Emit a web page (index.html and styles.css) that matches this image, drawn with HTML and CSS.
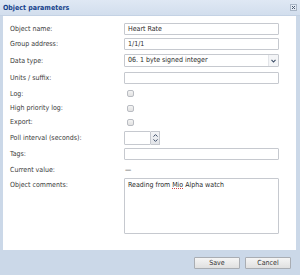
FILE: index.html
```html
<!DOCTYPE html>
<html>
<head>
<meta charset="utf-8">
<link rel="stylesheet" href="styles.css">
</head>
<body>
<div class="dialog">
  <div class="titlebar">
    <span class="title">Object parameters</span>
    <span class="close"><svg width="7" height="7" viewBox="0 0 7 7"><rect x="0.5" y="0.5" width="6" height="6" fill="#e4ebf4" stroke="#a9b6c6"/><path d="M2 2 L5 5 M5 2 L2 5" stroke="#4a5a70" stroke-width="1"/></svg></span>
  </div>
  <div class="main">
    <div class="panel">
      <div class="row r1"><span class="label">Object name:</span><div class="field">Heart Rate</div></div>
      <div class="row r2"><span class="label">Group address:</span><div class="field">1/1/1</div></div>
      <div class="row r3"><span class="label">Data type:</span><div class="field select"><span class="val">06. 1 byte signed integer</span><span class="arrow"><svg width="5" height="4" viewBox="0 0 5 4"><path d="M0.5 0.8 L2.5 3 L4.5 0.8" fill="none" stroke="#3b4c66" stroke-width="1.1"/></svg></span></div></div>
      <div class="row r4"><span class="label">Units / suffix:</span><div class="field"></div></div>
      <div class="row r5"><span class="label">Log:</span><span class="check"></span></div>
      <div class="row r6"><span class="label">High priority log:</span><span class="check"></span></div>
      <div class="row r7"><span class="label">Export:</span><span class="check"></span></div>
      <div class="row r8"><span class="label">Poll interval (seconds):</span><div class="spin"><div class="field small"></div><div class="spinbtn"><svg width="5" height="3" viewBox="0 0 5 3"><path d="M0.5 2.6 L2.5 0.6 L4.5 2.6" fill="none" stroke="#3b4c66" stroke-width="1"/></svg><svg width="5" height="3" viewBox="0 0 5 3"><path d="M0.5 0.4 L2.5 2.4 L4.5 0.4" fill="none" stroke="#3b4c66" stroke-width="1"/></svg></div></div></div>
      <div class="row r9"><span class="label">Tags:</span><div class="field"></div></div>
      <div class="row r10"><span class="label">Current value:</span><span class="dash">&mdash;</span></div>
      <div class="row r11"><span class="label">Object comments:</span><div class="field area">Reading from <span class="spell">Mio</span> Alpha watch</div></div>
    </div>
  </div>
  <div class="footer">
    <span class="btn">Save</span>
    <span class="btn">Cancel</span>
  </div>
</div>
</body>
</html>
```
FILE: styles.css
```css
html, body {
  margin: 0;
  padding: 0;
  background: #cbd8e8;
}
.dialog {
  width: 300px;
  height: 275px;
  display: flex;
  flex-direction: column;
  font-family: "DejaVu Sans Condensed", "DejaVu Sans", sans-serif;
  font-size: 7px;
  color: #3a3a3a;
  background: #cbd8e8;
}
.titlebar {
  height: 15px;
  display: flex;
  align-items: center;
  justify-content: space-between;
  padding: 0 3px 0 3px;
  background: linear-gradient(#dfe8f4, #d2deed);
  border-bottom: 1px solid #c4d2e4;
}
.title {
  font-weight: bold;
  color: #15428b;
  font-size: 7px;
}
.close {
  display: flex;
  width: 7px;
  height: 7px;
  margin-top: -1px;
}
.main {
  flex: 1;
  padding: 0 4px 0 3px;
  display: flex;
}
.panel {
  flex: 1;
  background: #fff;
  padding: 5px 0 0 7px;
}
.row {
  display: flex;
  align-items: center;
}
.label {
  width: 114px;
  flex: none;
}
.r1 { height: 15px; }
.r2 { height: 15px; }
.r3 { height: 19px; }
.r4 { height: 16px; }
.r5 { height: 15px; }
.r6 { height: 14px; }
.r7 { height: 14px; }
.r8 { height: 17px; }
.r9 { height: 16px; }
.r10 { height: 16px; }
.r11 { align-items: flex-start; }
.r11 .label { padding-top: 3px; }
.field {
  box-sizing: border-box;
  width: 155px;
  height: 12px;
  border: 1px solid #c6c9cf;
  border-radius: 1px;
  background: #fff;
  padding: 0 3px;
  line-height: 10px;
  color: #2a2a2a;
}
.select {
  height: 13px;
  display: flex;
  justify-content: space-between;
  padding-right: 0;
  line-height: 11px;
}
.arrow {
  width: 9px;
  display: flex;
  align-items: center;
  justify-content: center;
  border-left: 1px solid #e3e5e9;
  background: #f4f5f7;
}
.check {
  margin-left: 3px;
  width: 7px;
  height: 7px;
  box-sizing: border-box;
  border: 1px solid #b9bcc2;
  border-radius: 2px;
  background: linear-gradient(#f4f4f4, #e2e2e2);
}
.spin {
  display: flex;
  height: 14px;
}
.field.small {
  width: 27px;
  height: 14px;
}
.spinbtn {
  box-sizing: border-box;
  width: 9px;
  height: 14px;
  display: flex;
  flex-direction: column;
  align-items: center;
  justify-content: center;
  gap: 2px;
  border: 1px solid #c6c9cf;
  border-left: none;
  background: linear-gradient(#f3f4f6, #e2e4e8);
}
.dash {
  color: #222;
  margin-left: 1px;
}
.area {
  height: 56px;
  padding-top: 2px;
  line-height: 9px;
}
.spell {
  text-decoration: underline dotted #d04848;
  text-decoration-thickness: 1px;
  text-underline-offset: 1px;
}
.footer {
  height: 25px;
  display: flex;
  justify-content: flex-end;
  align-items: center;
  gap: 5px;
  padding-right: 9px;
  background: #cbd8e8;
}
.btn {
  box-sizing: border-box;
  width: 46px;
  height: 12px;
  display: flex;
  align-items: center;
  justify-content: center;
  border: 1px solid #a9adb3;
  border-radius: 1px;
  background: linear-gradient(#f5f5f5, #e0e0e0);
  color: #333;
  margin-top: 1px;
}
```
